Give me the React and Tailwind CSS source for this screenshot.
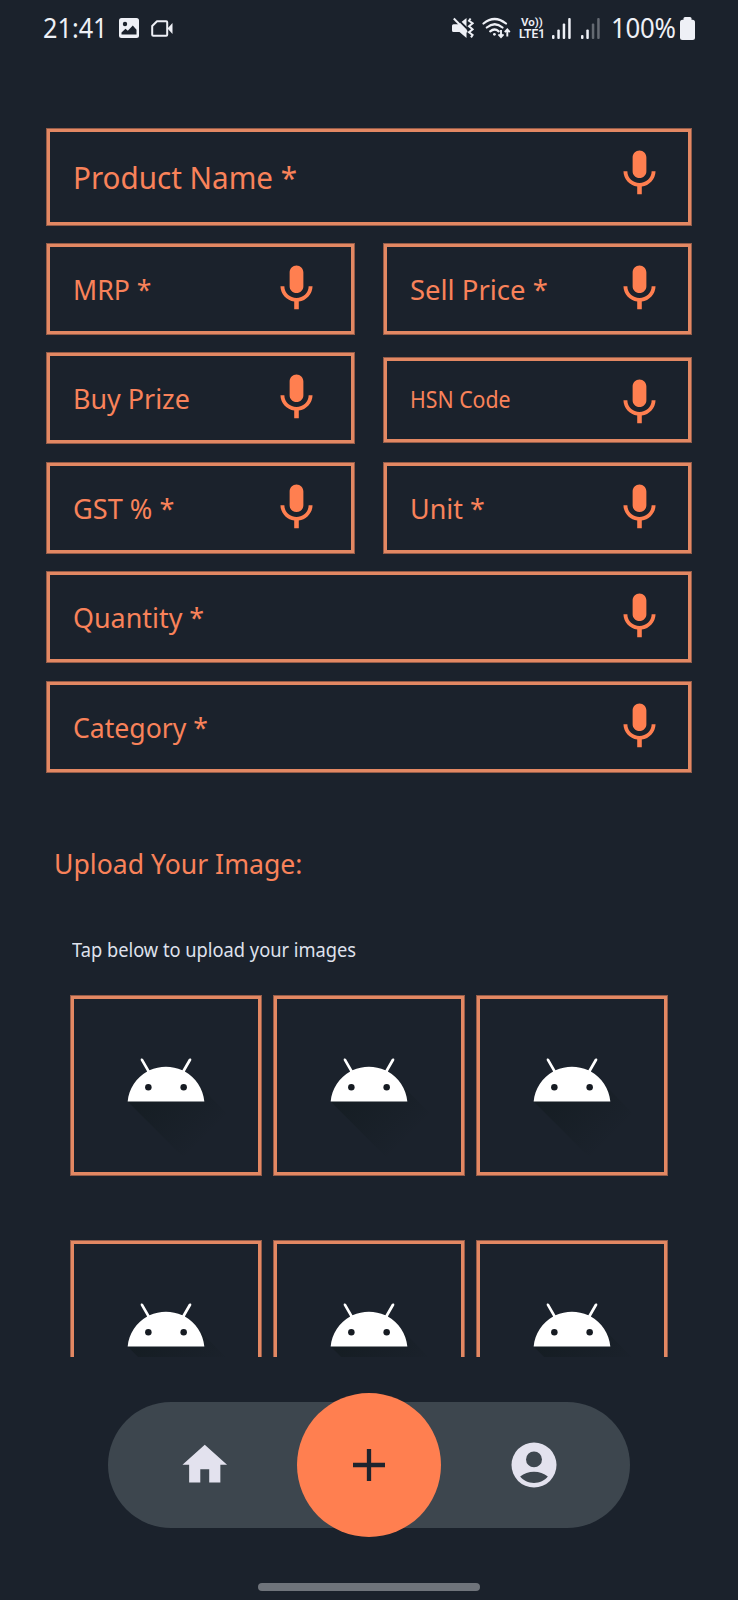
import React from "react";

function Mic({ className = "" }) {
  return (
    <svg viewBox="0 0 24 24" className={`mt-[17px] h-[55px] w-[55px] shrink-0 fill-[#ff7f50] ${className}`}>
      <path d="M12 14c1.66 0 3-1.34 3-3V5c0-1.66-1.34-3-3-3S9 3.34 9 5v6c0 1.66 1.34 3 3 3zm5.3-3c0 3-2.54 5.1-5.3 5.1S6.7 14 6.7 11H5c0 3.41 2.72 6.23 6 6.72V21h2v-3.28c3.28-.48 6-3.3 6-6.72h-1.7z" />
    </svg>
  );
}

function Field({ label, className = "h-[92px]", text = "text-[28px] scale-x-[0.96]", mic = "mr-[24px]" }) {
  return (
    <div className={`flex shrink-0 items-start justify-between border border-[#955c49] pl-[26px] shadow-[inset_0_0_0_3px_#e38863] ${className}`}>
      <div className="flex h-full items-center">
        <span className={`origin-left whitespace-nowrap leading-none text-[#f9825a] ${text}`}>{label}</span>
      </div>
      <Mic className={mic} />
    </div>
  );
}

function Android() {
  return (
    <svg viewBox="0 0 108 108" className="h-[180px] w-[180px] shrink-0">
      <defs>
        <linearGradient id="shade" gradientUnits="userSpaceOnUse" x1="42.95" y1="49.6" x2="79" y2="85.65">
          <stop offset="0" stopColor="#06100c" stopOpacity="0.3" />
          <stop offset="1" stopColor="#06100c" stopOpacity="0" />
        </linearGradient>
      </defs>
      <path fill="url(#shade)" d="M31,63.928c0,0 6.4,-11 12.1,-13.1c7.2,-2.6 26,-1.4 26,-1.4l38.1,38.1L107,108.928l-32,-1L31,63.928z" />
      <path fill="#fff" d="M65.3,45.828l3.8,-6.6c0.2,-0.4 0.1,-0.9 -0.3,-1.1c-0.4,-0.2 -0.9,-0.1 -1.1,0.3l-3.9,6.7c-6.3,-2.8 -13.4,-2.8 -19.7,0l-3.9,-6.7c-0.2,-0.4 -0.7,-0.5 -1.1,-0.3C38.8,38.328 38.7,38.828 38.9,39.228l3.8,6.6C36.2,49.428 31.7,56.028 31,63.928h46C76.3,56.028 71.8,49.428 65.3,45.828z" />
      <circle cx="43.4" cy="55.4" r="1.95" fill="#161b22" />
      <circle cx="64.6" cy="55.4" r="1.95" fill="#161b22" />
    </svg>
  );
}

function Tile() {
  return (
    <div className="flex h-[180.5px] w-[192px] items-start justify-center border border-[#955c49] shadow-[inset_0_0_0_3px_#e38863]">
      <div className="-mt-px"><Android /></div>
    </div>
  );
}

function StatusBar() {
  return (
    <header className="flex h-[56px] shrink-0 items-center text-[#eef0f6]">
      <div className="ml-[43px] w-[76px]">
        <span className="mt-px inline-block origin-left scale-x-[0.935] whitespace-nowrap text-[27px] leading-none">21:41</span>
      </div>
      <svg viewBox="0 0 20 20" className="h-[20px] w-[20px]">
        <rect width="20" height="20" rx="2.5" fill="#eef0f6" />
        <circle cx="6" cy="6" r="2.2" fill="#1b222d" />
        <path d="M2.5 16.5v-2l4-3.8 2.3 2 5-5.2 3.7 4.2v4.8z" fill="#1b222d" />
      </svg>
      <svg viewBox="0 0 22 17" className="ml-[12px] h-[17px] w-[22px]">
        <path d="M6 1.2h9.2q1 0 1 1v12.6q0 1-1 1H2.2q-1 0-1-1V6z" fill="none" stroke="#eef0f6" strokeWidth="2" strokeLinejoin="round" />
        <path d="M16.5 8.5L21.5 3v11z" fill="#eef0f6" />
      </svg>
      <svg viewBox="0 0 22 22" className="ml-[279px] h-[22px] w-[22px]">
        <path d="M1.5 7.2h5L14.5 1v20l-7-6H1.5q-1.500 0-1.500-1.500V8.700q0-1.500 1.500-1.500z" fill="#eef0f6" />
        <path d="M4 .5L15 11.500" stroke="#1b222d" strokeWidth="1.800" />
        <path d="M1.800 1.500L15 15" stroke="#eef0f6" strokeWidth="2" />
        <path d="M18.600 1.500l-1.600 2.200 3.600 2.600-3.600 3 3.600 3-3.600 3 3.600 2.700-1.600 2.400" fill="none" stroke="#eef0f6" strokeWidth="2" />
      </svg>
      <svg viewBox="0 0 29 22" className="ml-[8px] h-[22px] w-[29px]" fill="none" stroke="#eef0f6" strokeWidth="2.2" strokeLinecap="round">
        <path d="M1.5 6.5q11-9 22.500 0M4.800 10.500q8-6.500 15.700 0M8.200 14.300q4.300-3.600 8.500 0" />
        <circle cx="12.400" cy="17.300" r="1.400" fill="#eef0f6" stroke="none" />
        <path d="M19 13v6.500M16.500 17.300l2.500 2.700 2.500-2.700M25.300 19.500V13M22.800 15.200l2.500-2.700 2.500 2.700" strokeWidth="1.900" strokeLinecap="butt" />
      </svg>
      <div className="ml-[6px] flex w-[30px] flex-col items-center font-[Roboto] font-semibold">
        <span className="h-[11.500px] whitespace-nowrap text-[11.500px] leading-[11.500px]">Vo))</span>
        <span className="h-[11.500px] whitespace-nowrap text-[12px] leading-[12px]">LTE1</span>
      </div>
      <svg viewBox="0 0 48 21" className="ml-[5px] h-[21px] w-[48px]" fill="#eef0f6">
        <rect x="0" y="17" width="2.500" height="4" rx="1" />
        <rect x="5.300" y="11.500" width="2.500" height="9.500" rx="1" />
        <rect x="10.700" y="5.500" width="2.500" height="15.500" rx="1" />
        <rect x="16.200" y="0" width="2.500" height="21" rx="1" />
        <rect x="29" y="17" width="2.500" height="4" rx="1" />
        <rect x="34.300" y="11.500" width="2.500" height="9.500" rx="1" />
        <rect x="39.800" y="5.500" width="2.500" height="15.500" rx="1" opacity=".35" />
        <rect x="45.200" y="0" width="2.500" height="21" rx="1" opacity=".35" />
      </svg>
      <div className="ml-[11px] w-[69px]">
        <span className="mt-px inline-block origin-left scale-x-[0.955] whitespace-nowrap text-[27px] leading-none tracking-[-0.3px]">100%</span>
      </div>
      <svg viewBox="0 0 15 23" className="h-[23px] w-[15px]" fill="#eef0f6">
        <rect x="3.500" y="0" width="8" height="5" rx="1.500" />
        <rect y="2.800" width="15" height="20.200" rx="2.500" />
      </svg>
    </header>
  );
}

export default function App() {
  return (
    <div className="flex h-[1600px] w-[738px] flex-col overflow-hidden bg-[#1b222c] font-['Noto_Sans',sans-serif]">
      <StatusBar />
      <main className="flex h-[1301px] shrink-0 flex-col overflow-hidden px-[46px] pt-[72px]">
        <Field label="Product Name *" className="h-[97.500px]" text="text-[31px] scale-x-[0.955] mt-[2px]" />
        <div className="mt-[17px] grid grid-cols-[309px_309px] gap-x-[28px] gap-y-[17.500px]">
          <Field label="MRP *" mic="mr-[30px]" text="text-[28px] scale-x-[0.95]" />
          <Field label="Sell Price *" text="text-[28px] scale-x-[0.98]" />
          <Field label="Buy Prize" mic="mr-[30px]" />
          <Field label="HSN Code" className="mt-[5px] h-[86px]" text="text-[23.500px] scale-x-[0.905]" />
          <Field label="GST % *" mic="mr-[30px]" text="text-[28px] scale-x-[0.97]" />
          <Field label="Unit *" />
        </div>
        <div className="mt-[17.500px] flex flex-col gap-[17.500px]">
          <Field label="Quantity *" />
          <Field label="Category *" text="text-[28px] scale-x-[0.95]" />
        </div>
        <h2 className="ml-[8px] mt-[70px] origin-left scale-x-[0.95] self-start whitespace-nowrap text-[28px] leading-[40px] text-[#f9825a]">
          Upload Your Image:
        </h2>
        <p className="ml-[26px] mt-[53px] origin-left scale-x-[0.913] self-start whitespace-nowrap text-[20px] leading-[28px] text-[#dfe1ec]">
          Tap below to upload your images
        </p>
        <div className="ml-[24px] mt-[31.500px] grid grid-cols-[192px_192px_192px] gap-x-[11px] gap-y-[64.500px]">
          {[0, 1, 2, 3, 4, 5].map((i) => <Tile key={i} />)}
        </div>
      </main>
      <nav className="mt-[36px] flex h-[144px] shrink-0 items-center justify-center">
        <div className="flex h-[126px] w-[522px] items-center justify-between rounded-full bg-[#3d464e]">
          <svg viewBox="0 0 24 24" className="ml-[70px] h-[53.500px] w-[53.500px] fill-[#e3e2ee]">
            <path d="M10 20v-6h4v6h5v-8h3L12 3 2 12h3v8z" />
          </svg>
          <div className="flex h-[144px] w-[144px] shrink-0 items-center justify-center rounded-full bg-[#ff7f50]">
            <svg viewBox="0 0 32 32" className="h-[32px] w-[32px]">
              <path d="M16 0v32M0 16h32" stroke="#1f242e" strokeWidth="4.300" />
            </svg>
          </div>
          <svg viewBox="0 0 24 24" className="mr-[69px] h-[54px] w-[54px]">
            <circle cx="12" cy="12" r="10" fill="#e3e2ee" />
            <circle cx="12" cy="9.500" r="3.550" fill="#3d464e" />
            <path d="M5.850 17.120C7.550 15.800 9.680 15 12 15s4.450.8 6.150 2.120C16.700 18.900 14.500 20 12 20s-4.700-1.100-6.150-2.880z" fill="#3d464e" />
          </svg>
        </div>
      </nav>
      <div className="mt-[46px] flex justify-center">
        <div className="h-[8px] w-[222px] rounded-full bg-[#6f747b]" />
      </div>
    </div>
  );
}
